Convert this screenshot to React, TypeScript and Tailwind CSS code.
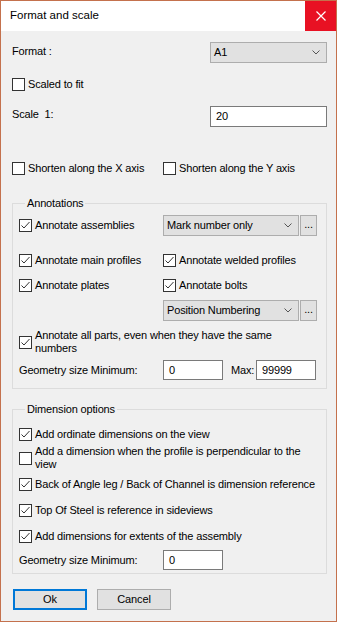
import React from 'react';

const font = { fontFamily: '"Liberation Sans", Arial, sans-serif' };

const Check = ({ checked }: { checked?: boolean }) => (
  <span className="w-[13px] h-[13px] border border-[#333333] bg-white shrink-0 flex items-center justify-center">
    {checked && (
      <svg width="11" height="11" viewBox="0 0 11 11">
        <path d="M1.5 5.5 L4 8 L9.5 2" fill="none" stroke="#333333" strokeWidth="1" />
      </svg>
    )}
  </span>
);

const CheckRow = ({ label, checked, className = '' }: { label: string; checked?: boolean; className?: string }) => (
  <div className={`flex items-center gap-[3px] h-[13px] ${className}`}>
    <Check checked={checked} />
    <span className="leading-[13px] whitespace-nowrap">{label}</span>
  </div>
);

const Combo = ({ value, className = '' }: { value: string; className?: string }) => (
  <div className={`h-[21px] bg-[#e1e1e1] border border-[#adadad] flex items-center justify-between pl-[3px] pr-[6px] ${className}`}>
    <span className="leading-[13px]">{value}</span>
    <svg width="8" height="5" viewBox="0 0 8 5">
      <path d="M0.5 0.5 L4 4 L7.5 0.5" fill="none" stroke="#555555" strokeWidth="1" />
    </svg>
  </div>
);

const Dots = () => (
  <div className="w-[17px] h-[21px] bg-[#e1e1e1] border border-[#adadad] flex items-center justify-center ml-[1px] leading-[13px] pb-[3px]">
    ...
  </div>
);

const Input = ({ value, className = '' }: { value: string; className?: string }) => (
  <div className={`bg-white border border-[#7a7a7a] flex items-center pl-[5px] leading-[13px] ${className}`}>{value}</div>
);

export default function App() {
  return (
    <div style={font} className="w-[337px] h-[622px] border border-[#c4714d] bg-[#f0f0f0] text-[11px] tracking-[-0.15px] text-black flex flex-col">
      {/* title bar */}
      <div className="h-[30px] bg-white flex items-center justify-between shrink-0">
        <span className="pl-[9px] text-[11.5px] tracking-normal">Format and scale</span>
        <div className="w-[31px] h-[30px] bg-[#e81123] flex items-center justify-center">
          <svg width="10" height="10" viewBox="0 0 10 10">
            <path d="M0.5 0.5 L9.5 9.5 M9.5 0.5 L0.5 9.5" stroke="#ffffff" strokeWidth="1.2" />
          </svg>
        </div>
      </div>

      <div className="pl-[11px] flex flex-col">
        <div className="mt-[11px] flex justify-between w-[315px]">
          <span className="leading-[12px] mt-[3px]">Format :</span>
          <Combo value="A1" className="w-[117px]" />
        </div>

        <CheckRow label="Scaled to fit" className="mt-[15px]" />

        <div className="mt-[15px] flex justify-between w-[315px]">
          <span className="leading-[12px] mt-[2px] whitespace-pre">Scale  1:</span>
          <Input value="20" className="w-[117px] h-[21px]" />
        </div>

        <div className="mt-[35px] flex">
          <CheckRow label="Shorten along the X axis" className="w-[151px]" />
          <CheckRow label="Shorten along the Y axis" />
        </div>

        <fieldset className="mt-[20px] w-[315px] border border-[#dcdcdc] pl-[6px] pb-[8px]">
          <legend className="ml-[6px] px-[2px] leading-[16px]">Annotations</legend>
          <div className="mt-[4px] flex items-center h-[21px]">
            <CheckRow label="Annotate assemblies" checked className="w-[144px]" />
            <Combo value="Mark number only" className="w-[136px]" />
            <Dots />
          </div>
          <div className="mt-[18px] flex">
            <CheckRow label="Annotate main profiles" checked className="w-[144px]" />
            <CheckRow label="Annotate welded profiles" checked />
          </div>
          <div className="mt-[12px] flex">
            <CheckRow label="Annotate plates" checked className="w-[144px]" />
            <CheckRow label="Annotate bolts" checked />
          </div>
          <div className="mt-[8px] flex items-center pl-[144px]">
            <Combo value="Position Numbering" className="w-[136px]" />
            <Dots />
          </div>
          <div className="mt-[8px] flex items-center gap-[3px] h-[26px]">
            <Check checked />
            <span className="leading-[13px] whitespace-nowrap">
              Annotate all parts, even when they have the same
              <br />
              numbers
            </span>
          </div>
          <div className="mt-[5px] flex items-center h-[20px]">
            <span className="w-[144px]">Geometry size Minimum:</span>
            <Input value="0" className="w-[60px] h-[20px]" />
            <span className="ml-[8px] w-[25px]">Max:</span>
            <Input value="99999" className="w-[60px] h-[20px]" />
          </div>
        </fieldset>

        <fieldset className="mt-[12px] w-[315px] border border-[#dcdcdc] pl-[6px] pb-[3px]">
          <legend className="ml-[6px] px-[2px] leading-[16px]">Dimension options</legend>
          <CheckRow label="Add ordinate dimensions on the view" checked className="mt-[11px]" />
          <div className="mt-[4px] flex items-center gap-[3px] h-[26px]">
            <Check />
            <span className="leading-[13px] whitespace-nowrap">
              Add a dimension when the profile is perpendicular to the
              <br />
              view
            </span>
          </div>
          <CheckRow label="Back of Angle leg / Back of Channel is dimension reference" checked className="mt-[7px]" />
          <CheckRow label="Top Of Steel is reference in sideviews" checked className="mt-[13px]" />
          <CheckRow label="Add dimensions for extents of the assembly" checked className="mt-[13px]" />
          <div className="mt-[7px] flex items-center h-[20px]">
            <span className="w-[144px]">Geometry size Minimum:</span>
            <Input value="0" className="w-[60px] h-[20px]" />
          </div>
        </fieldset>

        <div className="mt-[15px] flex gap-[10px] pl-[1px]">
          <button className="w-[74px] h-[21px] bg-[#e1e1e1] border-2 border-[#0078d7] leading-[13px]">Ok</button>
          <button className="w-[74px] h-[21px] bg-[#e1e1e1] border border-[#adadad] leading-[13px]">Cancel</button>
        </div>
      </div>
    </div>
  );
}
